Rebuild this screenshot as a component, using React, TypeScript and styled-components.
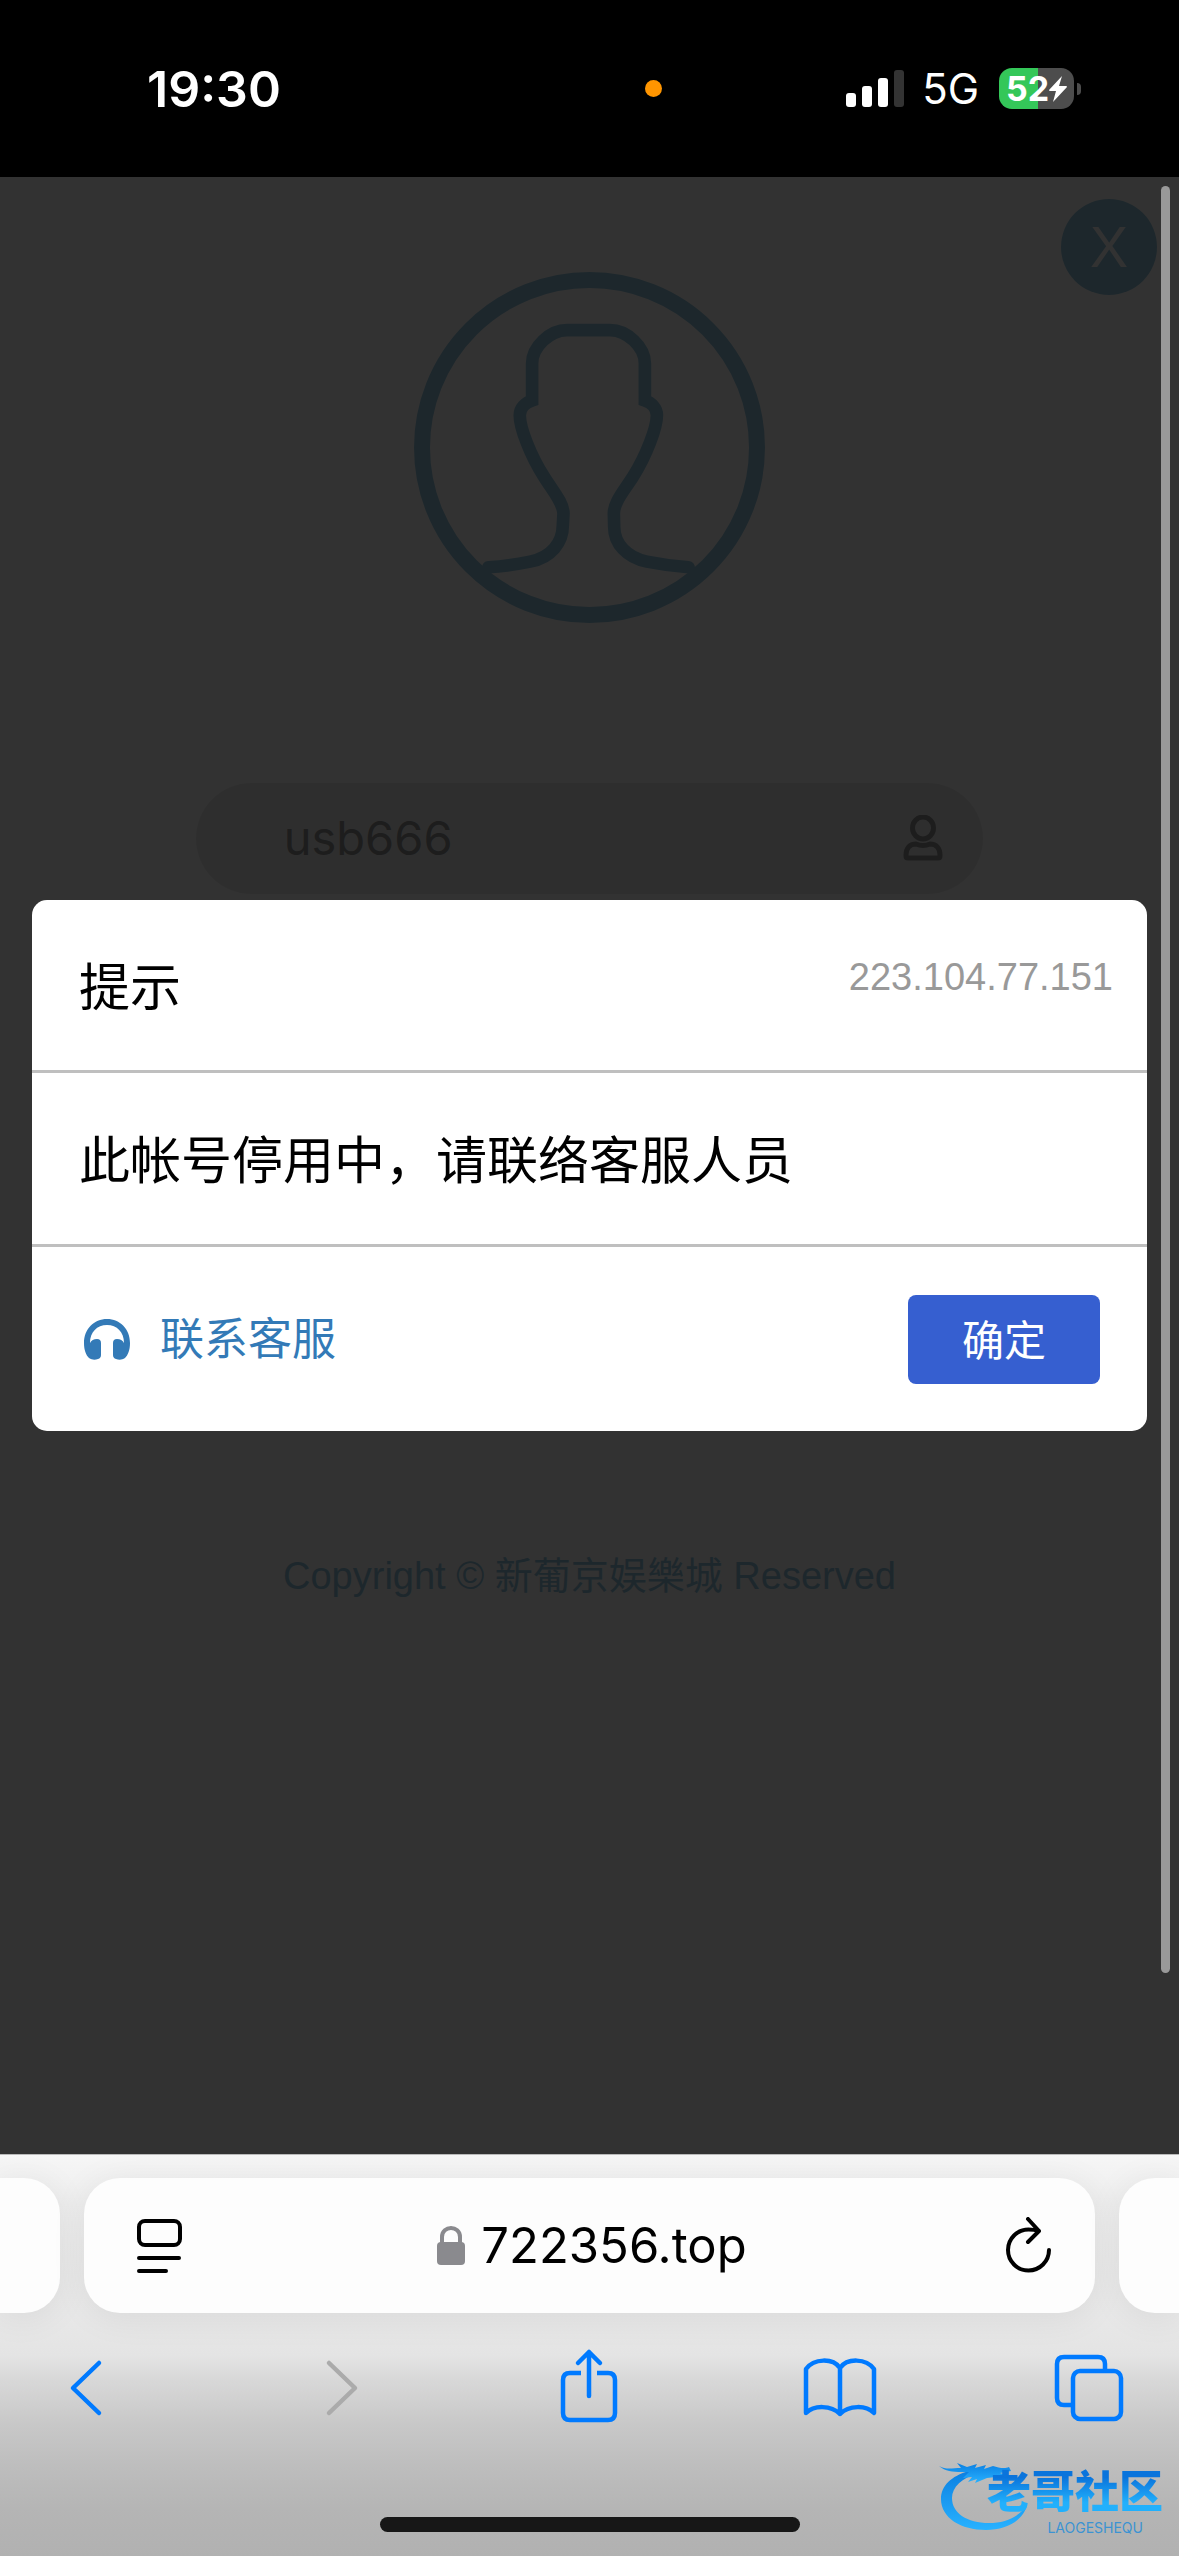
import React from "react";
import styled, { createGlobalStyle } from "styled-components";

const GlobalStyle = createGlobalStyle`
  *, *::before, *::after { box-sizing: border-box; }
  body {
    margin: 0;
    background: #000;
    font-family: "Liberation Sans", "Noto Sans CJK SC", sans-serif;
  }
  button, input { font-family: inherit; margin: 0; padding: 0; border: 0; background: none; }
  svg { display: block; }
`;

const system = `Inter, "Noto Sans CJK SC", sans-serif`;

const Screen = styled.div`
  display: flex;
  flex-direction: column;
  min-height: 100vh;
`;

/* ---------- status bar ---------- */

const StatusBar = styled.header`
  display: grid;
  grid-template-columns: 59.7% 1fr auto;
  align-items: center;
  height: 177px;
  padding-right: 98px;
  background: #000;
  color: #fff;
  font-family: ${system};
`;

const Clock = styled.time`
  padding-left: 147px;
  font-size: 50px;
  line-height: 60px;
  font-weight: 600;
`;

const RecordingDot = styled.span`
  width: 17px;
  height: 17px;
  border-radius: 50%;
  background: #ff9500;
`;

const StatusIcons = styled.div`
  display: flex;
  align-items: center;
`;

const Network = styled.span`
  margin: 0 20px 0 18px;
  font-size: 42px;
  line-height: 50px;
`;

const Battery = styled.span`
  display: flex;
  align-items: center;
  justify-content: center;
  width: 75px;
  height: 41px;
  border-radius: 13px;
  background: linear-gradient(90deg, #34c759 52%, #4d4d4d 52%);
  font-size: 34px;
  line-height: 41px;
  font-weight: 700;
`;

const BatteryTip = styled.span`
  width: 4px;
  height: 12px;
  margin-left: 3px;
  border-radius: 0 4px 4px 0;
  background: #4d4d4d;
`;

/* ---------- web page ---------- */

const Viewport = styled.main`
  position: relative;
  flex: 1;
  padding-top: 95px;
  background: #fafafa;
`;

const LoginForm = styled.form`
  display: flex;
  flex-direction: column;
  align-items: center;
`;

const CloseButton = styled.button`
  position: absolute;
  top: 22px;
  right: 22px;
  width: 96px;
  height: 96px;
  border-radius: 50%;
  background: #91c3dc;
  color: #fafafa;
  font-size: 57px;
  line-height: 92px;
`;

const AccountField = styled.label`
  display: flex;
  align-items: center;
  justify-content: space-between;
  width: 66.8%;
  height: 111px;
  margin-top: 160px;
  padding: 0 40px 2px 88px;
  border-radius: 56px;
  background: #e6e6e6;
`;

const AccountInput = styled.input`
  flex: 1;
  min-width: 0;
  height: 80px;
  color: #919191;
  font-family: ${system};
  font-size: 47px;
  outline: none;
`;

const Copyright = styled.p`
  margin: 655px 0 0;
  color: #91c3dc;
  font-size: 38px;
  line-height: 54px;
  text-align: center;
`;

const ScrollThumb = styled.div`
  position: absolute;
  top: 9px;
  right: 9px;
  width: 9px;
  height: 90.4%;
  border-radius: 5px;
  background: #999;
`;

/* ---------- dialog ---------- */

const Backdrop = styled.div`
  position: absolute;
  inset: 0;
  display: flex;
  align-items: center;
  padding: 0 32px;
  background: rgba(0, 0, 0, 0.8);
`;

const Dialog = styled.section`
  width: 100%;
  border-radius: 15px;
  background: #fff;
  color: #000;
`;

const DialogHeader = styled.div`
  display: flex;
  align-items: flex-start;
  justify-content: space-between;
  padding: 50px 34px 46px 47px;
  border-bottom: 3px solid #bfbfbf;
`;

const DialogTitle = styled.h1`
  margin: 0;
  padding-top: 4px;
  font-size: 51px;
  line-height: 70px;
  font-weight: 400;
`;

const Address = styled.span`
  color: #999;
  font-size: 38px;
  line-height: 54px;
`;

const Message = styled.p`
  margin: 0;
  padding: 54px 47px 47px;
  border-bottom: 3px solid #bfbfbf;
  font-size: 51px;
  line-height: 70px;
`;

const DialogFooter = styled.div`
  display: flex;
  align-items: center;
  justify-content: space-between;
  padding: 48px 47px 47px;
`;

const ServiceLink = styled.a`
  display: flex;
  align-items: center;
  gap: 30px;
  padding-left: 5px;
  color: #337ab7;
  font-size: 44px;
  line-height: 70px;
  text-decoration: none;
`;

const ConfirmButton = styled.button`
  width: 192px;
  height: 89px;
  padding-top: 4px;
  border-radius: 8px;
  background: #365fd0;
  color: #fff;
  font-size: 42px;
  line-height: 60px;
`;

/* ---------- browser chrome ---------- */

const BrowserBar = styled.footer`
  position: relative;
  overflow: hidden;
  padding: 23px 0 24px;
  border-top: 1px solid #b9b9b9;
  background: linear-gradient(
    #f6f6f6 0%, #eee 12%, #e8e8e8 40%, #e4e4e4 50%, #d8d8d8 56%,
    #c8c8c8 67%, #bdbdbd 78%, #b5b5b5 88%, #b1b1b1 100%
  );
  font-family: ${system};
`;

const TabStrip = styled.div`
  display: grid;
  grid-template-columns: 60px 1fr 60px;
  gap: 24px;
  height: 135px;
`;

const NeighbourTab = styled.div<{ $side: "left" | "right" }>`
  border-radius: ${(p) => (p.$side === "left" ? "0 36px 36px 0" : "36px 0 0 36px")};
  background: #fdfdfd;
  box-shadow: 0 4px 36px rgba(0, 0, 0, 0.07);
`;

const AddressBar = styled.div`
  display: grid;
  grid-template-columns: 48px 1fr 48px;
  align-items: center;
  padding: 0 42px 0 51px;
  border-radius: 36px;
  background: #fdfdfd;
  box-shadow: 0 4px 36px rgba(0, 0, 0, 0.07);
`;

const Url = styled.button`
  display: flex;
  align-items: center;
  justify-content: center;
  gap: 16px;
  padding-right: 4px;
  color: #000;
  font-size: 49px;
  line-height: 60px;
`;

const IconButton = styled.button`
  display: block;
`;

const Toolbar = styled.nav`
  display: flex;
  justify-content: space-between;
  margin-top: 33px;
  padding: 0 50px 0 49px;
`;

const HomeIndicator = styled.div`
  width: 420px;
  height: 15px;
  margin: 91px auto 0;
  border-radius: 8px;
  background: #171717;
`;

const Watermark = styled.div`
  position: absolute;
  right: 16px;
  bottom: 20px;
  display: flex;
`;

const WatermarkMark = styled.svg`
  margin-right: -42px;
`;

const WatermarkText = styled.div`
  display: flex;
  flex-direction: column;
  align-items: flex-end;
  gap: 8px;
  padding-top: 6px;
`;

const WatermarkName = styled.span`
  background: linear-gradient(#0a74dc 25%, #22b0fc 80%);
  background-clip: text;
  color: transparent;
  font-family: "Noto Sans CJK SC", sans-serif;
  font-size: 44px;
  line-height: 46px;
  font-weight: 900;
`;

const WatermarkLatin = styled.span`
  padding-right: 20px;
  color: #3c93d2;
  font-size: 14px;
  line-height: 16px;
`;

const toolStroke = {
  fill: "none",
  stroke: "#007aff",
  strokeWidth: 4.5,
  strokeLinecap: "round" as const,
  strokeLinejoin: "round" as const,
};

function Tool({ label, disabled, children }: { label: string; disabled?: boolean; children: React.ReactNode }) {
  return (
    <IconButton type="button" aria-label={label} disabled={disabled}>
      <svg width="76" height="80" viewBox="0 0 76 80" {...toolStroke}>{children}</svg>
    </IconButton>
  );
}

function SignalIcon() {
  return (
    <svg width="58" height="38" viewBox="0 0 58 38" fill="#fff">
      <rect x="0" y="23" width="10" height="14" rx="3" />
      <rect x="16" y="16" width="10" height="21" rx="3" />
      <rect x="32" y="8" width="10" height="29" rx="3" />
      <rect x="48" y="0" width="10" height="37" rx="3" fill="#333" />
    </svg>
  );
}

function AvatarIcon() {
  return (
    <svg width="351" height="351" viewBox="72 66 1052 1052" fill="none" stroke="#91c3dc">
      <circle cx="598" cy="592" r="502" strokeWidth="48" />
      <path
        strokeWidth="38"
        strokeLinecap="round"
        d="M295 951Q350 948 420 934C484 922 518 876 518 826L520 790C520 758 488 722 462 680C420 615 389 532 389 495C389 474 406 458 426 451V340C426 290 480 240 530 240H660C710 240 764 290 764 340V451C784 458 800 474 800 495C800 532 769 615 728 680C700 724 671 756 671 790L672 830C672 880 710 922 770 934Q830 946 895 951"
      />
    </svg>
  );
}

function UserIcon() {
  return (
    <svg width="40" height="46" viewBox="0 0 40 46" fill="none" stroke="#919191" strokeWidth="5">
      <ellipse cx="20" cy="13" rx="10.5" ry="11" />
      <path d="M13 29C6 29 3 34 3 40V41Q3 43 5 43H35Q37 43 37 41V40C37 34 34 29 27 29Q20 32 13 29Z" />
    </svg>
  );
}

function HeadsetIcon() {
  return (
    <svg width="46" height="42" viewBox="0 0 46 42" fill="#337ab7">
      <path d="M23 0C10 0 0 10 0 24C0 31 2 36 5 39C8 41 11 41 14 40Q17 39 17 36V24Q17 20 13 20Q8 20 6 24C6 13 13 6 23 6S40 13 40 24Q38 20 33 20Q29 20 29 24V36Q29 39 32 40C35 41 38 41 41 39C44 36 46 31 46 24C46 10 36 0 23 0Z" />
    </svg>
  );
}

function DragonMark() {
  return (
    <WatermarkMark width="90" height="72" viewBox="0 0 90 72" aria-hidden="true">
      <defs>
        <linearGradient id="dragon" x1="0" y1="0" x2="0" y2="1">
          <stop offset="0" stopColor="#0b80e2" />
          <stop offset="1" stopColor="#28b2ff" />
        </linearGradient>
      </defs>
      <g fill="url(#dragon)">
        <path d="M30 11C12 16 2 26 2 39C2 58 22 70 47 70C67 70 84 61 88 45C80 57 66 63 50 63C28 63 13 53 13 38C13 27 23 18 39 13Z" />
        <path d="M0 6C7 10 13 8 22 8L18 3L28 7L38 4L36 8L47 5L45 9L54 6C60 8 66 9 70 7L72 11L61 13L70 16L68 19L57 17L48 18L36 23L38 19L29 22L33 17L24 18L30 12C18 12 8 13 0 6Z" />
      </g>
    </WatermarkMark>
  );
}

export default function App() {
  return (
    <Screen>
      <GlobalStyle />
      <StatusBar>
        <Clock>19:30</Clock>
        <RecordingDot />
        <StatusIcons>
          <SignalIcon />
          <Network>5G</Network>
          <Battery>
            52
            <svg width="18" height="26" viewBox="0 0 18 26" fill="#fff">
              <path d="M13 0L0 14Q0 15 1 15H7L4 26L18 11Q18 10 17 10H10L13 0Z" />
            </svg>
          </Battery>
          <BatteryTip />
        </StatusIcons>
      </StatusBar>

      <Viewport>
        <LoginForm>
          <AvatarIcon />
          <AccountField>
            <AccountInput type="text" aria-label="帐号" defaultValue="usb666" />
            <UserIcon />
          </AccountField>
        </LoginForm>
        <Copyright>Copyright © 新葡京娱樂城 Reserved</Copyright>
        <CloseButton type="button">X</CloseButton>

        <Backdrop>
          <Dialog role="dialog" aria-modal="true" aria-labelledby="dialog-title">
            <DialogHeader>
              <DialogTitle id="dialog-title">提示</DialogTitle>
              <Address>223.104.77.151</Address>
            </DialogHeader>
            <Message>此帐号停用中，请联络客服人员</Message>
            <DialogFooter>
              <ServiceLink href="#service">
                <HeadsetIcon />
                联系客服
              </ServiceLink>
              <ConfirmButton type="button">确定</ConfirmButton>
            </DialogFooter>
          </Dialog>
        </Backdrop>
        <ScrollThumb />
      </Viewport>

      <BrowserBar>
        <TabStrip>
          <NeighbourTab $side="left" />
          <AddressBar>
            <IconButton type="button" aria-label="页面设置">
              <svg width="48" height="58" viewBox="0 0 48 58" fill="none" stroke="#000" strokeWidth="4" strokeLinecap="round">
                <rect x="4" y="4" width="41" height="24" rx="6" />
                <path d="M4 41H44M4 54H31" />
              </svg>
            </IconButton>
            <Url type="button">
              <svg width="28" height="40" viewBox="0 0 28 40">
                <rect x="0" y="16" width="28" height="23" rx="4" fill="#8a8a8e" />
                <path d="M5 18V11C5 -1 23 -1 23 11V18" fill="none" stroke="#8a8a8e" strokeWidth="4" />
              </svg>
              722356.top
            </Url>
            <IconButton type="button" aria-label="重新载入">
              <svg width="48" height="58" viewBox="0 0 48 58" fill="none" stroke="#000" strokeWidth="4" strokeLinecap="round" strokeLinejoin="round">
                <path d="M44 33A20.5 20.5 0 1 1 23.5 12.5Q29 12.5 34 14M23 2L34 14L23 25" />
              </svg>
            </IconButton>
          </AddressBar>
          <NeighbourTab $side="right" />
        </TabStrip>
        <Toolbar>
          <Tool label="后退"><path d="M50 17L24 42L50 67" /></Tool>
          <Tool label="前进" disabled><path stroke="#ababab" d="M29 17L55 42L29 67" /></Tool>
          <Tool label="分享">
            <path strokeLinecap="butt" d="M30 27H19Q12 27 12 34V67Q12 74 19 74H57Q64 74 64 67V34Q64 27 57 27H46" />
            <path d="M38 50V6M27 17L38 6L49 17" />
          </Tool>
          <Tool label="书签">
            <path d="M38 22C31 12 12 12 4 23V67C12 59 29 59 38 68C47 59 64 59 72 67V23C64 12 45 12 38 22V68" />
          </Tool>
          <Tool label="标签页">
            <rect x="20" y="25" width="48" height="48" rx="7" />
            <path strokeLinecap="butt" d="M19 59H11Q4 59 4 52V18Q4 11 11 11H45Q52 11 52 18V24" />
          </Tool>
        </Toolbar>
        <HomeIndicator />
        <Watermark>
          <DragonMark />
          <WatermarkText>
            <WatermarkName>老哥社区</WatermarkName>
            <WatermarkLatin>LAOGESHEQU</WatermarkLatin>
          </WatermarkText>
        </Watermark>
      </BrowserBar>
    </Screen>
  );
}
